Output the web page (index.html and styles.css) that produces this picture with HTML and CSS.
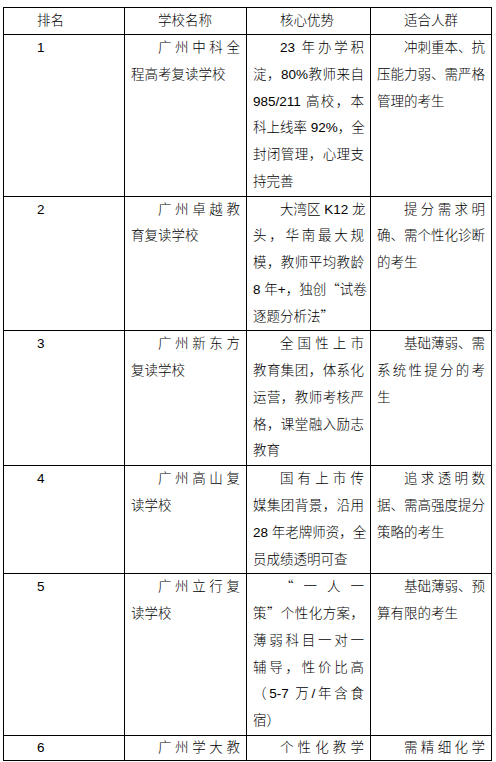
FILE: index.html
```html
<!DOCTYPE html>
<html lang="zh-CN">
<head>
<meta charset="utf-8">
<title>广州复读学校排名</title>
<link rel="stylesheet" href="styles.css">
</head>
<body>
<table class="grid">
  <colgroup>
    <col class="c-rank">
    <col class="c-name">
    <col class="c-adv">
    <col class="c-fit">
  </colgroup>
  <thead>
    <tr class="head">
      <th><span class="ln first end">排名</span></th>
      <th><span class="ln first end">学校名称</span></th>
      <th><span class="ln first end">核心优势</span></th>
      <th><span class="ln first end">适合人群</span></th>
    </tr>
  </thead>
  <tbody>
    <tr>
      <td><span class="ln first end">1</span></td>
      <td><span class="ln first">广州中科全</span><span class="ln end">程高考复读学校</span></td>
      <td><span class="ln first">23 年办学积</span><span class="ln">淀，80%教师来自</span><span class="ln">985/211 高校，本</span><span class="ln">科上线率 92%，全</span><span class="ln">封闭管理，心理支</span><span class="ln end">持完善</span></td>
      <td><span class="ln first">冲刺重本、抗</span><span class="ln">压能力弱、需严格</span><span class="ln end">管理的考生</span></td>
    </tr>
    <tr>
      <td><span class="ln first end">2</span></td>
      <td><span class="ln first">广州卓越教</span><span class="ln end">育复读学校</span></td>
      <td><span class="ln first">大湾区 K12 龙</span><span class="ln">头，华南最大规</span><span class="ln">模，教师平均教龄</span><span class="ln">8 年+，独创<span class="q">“</span>试卷</span><span class="ln end">逐题分析法<span class="q">”</span></span></td>
      <td><span class="ln first">提分需求明</span><span class="ln">确、需个性化诊断</span><span class="ln end">的考生</span></td>
    </tr>
    <tr>
      <td><span class="ln first end">3</span></td>
      <td><span class="ln first">广州新东方</span><span class="ln end">复读学校</span></td>
      <td><span class="ln first">全国性上市</span><span class="ln">教育集团，体系化</span><span class="ln">运营，教师考核严</span><span class="ln">格，课堂融入励志</span><span class="ln end">教育</span></td>
      <td><span class="ln first">基础薄弱、需</span><span class="ln">系统性提分的考</span><span class="ln end">生</span></td>
    </tr>
    <tr>
      <td><span class="ln first end">4</span></td>
      <td><span class="ln first">广州高山复</span><span class="ln end">读学校</span></td>
      <td><span class="ln first">国有上市传</span><span class="ln">媒集团背景，沿用</span><span class="ln">28 年老牌师资，全</span><span class="ln end">员成绩透明可查</span></td>
      <td><span class="ln first">追求透明数</span><span class="ln">据、需高强度提分</span><span class="ln end">策略的考生</span></td>
    </tr>
    <tr>
      <td><span class="ln first end">5</span></td>
      <td><span class="ln first">广州立行复</span><span class="ln end">读学校</span></td>
      <td><span class="ln first"><span class="q">“</span>一人一</span><span class="ln">策<span class="q">”</span>个性化方案，</span><span class="ln">薄弱科目一对一</span><span class="ln">辅导，性价比高</span><span class="ln">（5-7 万/年含食</span><span class="ln end">宿）</span></td>
      <td><span class="ln first">基础薄弱、预</span><span class="ln end">算有限的考生</span></td>
    </tr>
    <tr class="cut">
      <td><span class="ln first end">6</span></td>
      <td><span class="ln first">广州学大教</span></td>
      <td><span class="ln first">个性化教学</span></td>
      <td><span class="ln first">需精细化学</span></td>
    </tr>
  </tbody>
</table>
</body>
</html>
```

FILE: styles.css
```css
html, body {
  margin: 0;
  padding: 0;
  background: #ffffff;
}

body {
  font-family: "Liberation Sans", "Noto Sans CJK SC", sans-serif;
  font-size: 13.5px;
  color: #000000;
}

.grid {
  border-collapse: collapse;
  table-layout: fixed;
  width: 488px;
  margin: 7px 0 0 3px;
}

.c-rank { width: 121px; }
.c-name { width: 122px; }
.c-adv  { width: 124px; }
.c-fit  { width: 121px; }

.grid th,
.grid td {
  border: 1px solid #000000;
  padding: 0 6px;
  vertical-align: top;
  text-align: left;
  font-weight: normal;
  line-height: 26.77px;
}

.ln {
  display: block;
  height: 26.77px;
  white-space: nowrap;
  text-align: justify;
  text-align-last: justify;
  font-weight: 300;
}

.head .ln {
  height: 26px;
  line-height: 26px;
}

.ln.first {
  text-indent: 2em;
}

.ln.end {
  text-align-last: left;
}

.q {
  font-family: "Noto Sans CJK SC", sans-serif;
  line-height: 0;
}

.cut .ln {
  height: 24px;
  line-height: 24px;
}
```
